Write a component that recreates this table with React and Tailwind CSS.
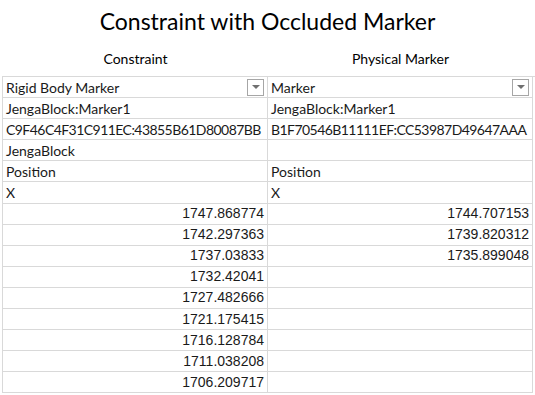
import React from 'react'

const LEFT = [
  'JengaBlock:Marker1',
  'C9F46C4F31C911EC:43855B61D80087BB',
  'JengaBlock',
  'Position',
  'X',
]
const RIGHT = ['JengaBlock:Marker1', 'B1F70546B11111EF:CC53987D49647AAA', '', 'Position', 'X']

const LEFT_NUMS = [
  '1747.868774', '1742.297363', '1737.03833', '1732.42041', '1727.482666',
  '1721.175415', '1716.128784', '1711.038208', '1706.209717',
]
const RIGHT_NUMS = ['1744.707153', '1739.820312', '1735.899048', '', '', '', '', '', '']

const textFont = { fontFamily: 'Lato, "Open Sans", sans-serif' }
const numFont = { fontFamily: '"Liberation Sans", Arial, sans-serif' }

function Cell({ children, right, num, first, tight }) {
  return (
    <div
      className={`h-[21.1px] border-b border-r border-[#d9d9d9] px-[3px] flex items-center overflow-hidden whitespace-nowrap text-[14px] text-[#1a1a1a] ${
        right ? 'justify-end text-[13.5px]' : ''
      } ${first ? 'border-l' : ''} ${tight ? 'tracking-[-0.55px]' : ''}`}
      style={num ? numFont : textFont}
    >
      {children}
    </div>
  )
}

function Filter() {
  return (
    <div className="ml-auto w-[17px] h-[17px] border border-[#a6a6a6] bg-white flex items-center justify-center">
      <div className="w-0 h-0 border-l-[4px] border-r-[4px] border-t-[4px] border-l-transparent border-r-transparent border-t-[#707070]" />
    </div>
  )
}

export default function App() {
  return (
    <div className="w-[535px] h-[395px] bg-white overflow-hidden" style={textFont}>
      <div className="h-[36px] flex items-end justify-center text-[23px] text-black leading-none pb-[3px]">
        Constraint with Occluded Marker
      </div>
      <div className="grid grid-cols-[265px_265px] ml-[3px] h-[40px] pt-[4px] items-center text-[14px] text-black">
        <div className="text-center">Constraint</div>
        <div className="text-center">Physical Marker</div>
      </div>
      <div className="grid grid-cols-[266px_265px] ml-[2px] border-t border-[#d9d9d9]">
        <Cell first>
          <span>Rigid Body Marker</span>
          <Filter />
        </Cell>
        <Cell>
          <span>Marker</span>
          <Filter />
        </Cell>
        {LEFT.map((t, i) => (
          <React.Fragment key={i}>
            <Cell first tight={i === 1}>{t}</Cell>
            <Cell tight={i === 1}>{RIGHT[i]}</Cell>
          </React.Fragment>
        ))}
        {LEFT_NUMS.map((n, i) => (
          <React.Fragment key={'n' + i}>
            <Cell first right num>{n}</Cell>
            <Cell right num>{RIGHT_NUMS[i]}</Cell>
          </React.Fragment>
        ))}
      </div>
    </div>
  )
}
